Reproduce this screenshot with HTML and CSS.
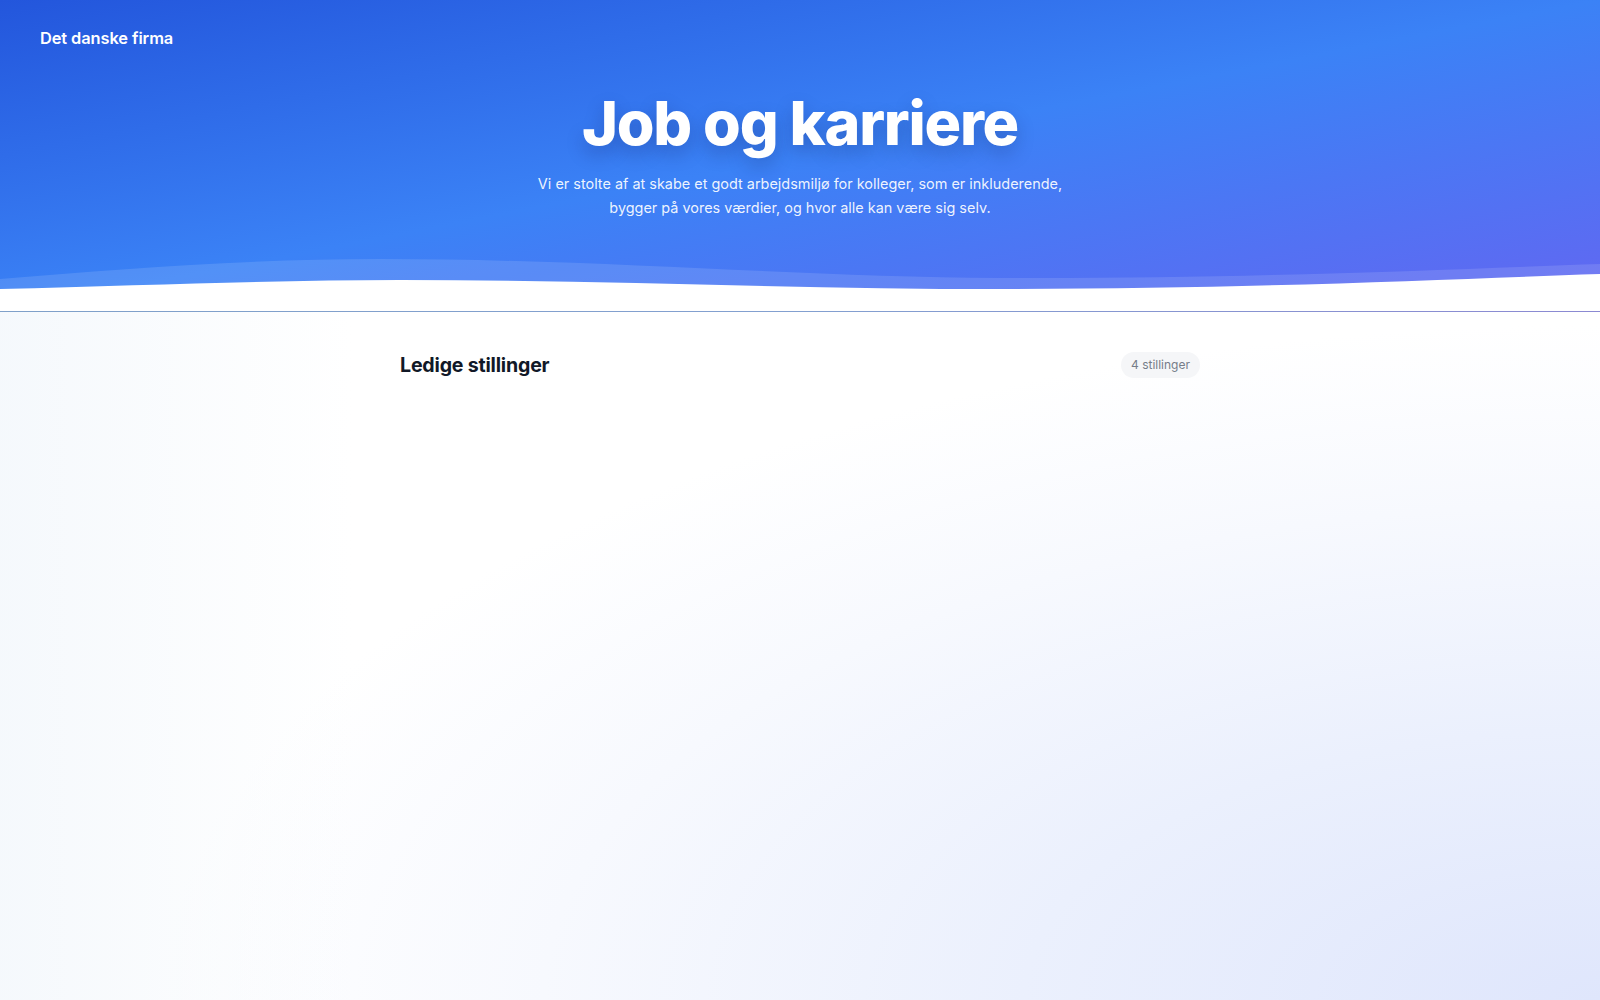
FILE: index.html
```html
<!DOCTYPE html>
<html lang="da">
<head>
<meta charset="utf-8">
<title>Job og karriere – Det danske firma</title>
<link rel="stylesheet" href="styles.css">
</head>
<body>
<section class="hero">
  <header class="topbar">
    <span class="brand">Det danske firma</span>
  </header>
  <div class="hero-content">
    <h1 class="hero-title">Job og karriere</h1>
    <p class="hero-sub">Vi er stolte af at skabe et godt arbejdsmiljø for kolleger, som er inkluderende, bygger på vores værdier, og hvor alle kan være sig selv.</p>
  </div>
  <svg class="wave" viewBox="0 0 1600 60" preserveAspectRatio="none" aria-hidden="true">
    <path d="M0,28 C120,18 250,8 380,8 C600,8 800,26 1000,27 C1250,28 1450,18 1600,13 L1600,60 L0,60 Z" fill="#ffffff" fill-opacity="0.12"/>
    <path d="M0,38 C150,34 280,29 400,29 C600,29 800,38 1000,38 C1250,38 1450,28 1600,23 L1600,60 L0,60 Z" fill="#ffffff"/>
  </svg>
  <div class="hero-line"></div>
</section>
<main class="jobs">
  <div class="jobs-head">
    <h2 class="jobs-title">Ledige stillinger</h2>
    <span class="badge">4 stillinger</span>
  </div>
</main>
</body>
</html>
```
FILE: styles.css
```css
html, body {
  margin: 0;
  padding: 0;
}
body {
  font-family: Inter, "Noto Sans", "Liberation Sans", sans-serif;
  min-height: 1000px;
  background:
    linear-gradient(90deg, rgba(244, 248, 252, 0.9) 0%, rgba(255, 255, 255, 0) 22%),
    radial-gradient(120% 90% at 100% 100%, #dfe6fc 0%, #ebf0fd 30%, #f7f9fe 55%, #ffffff 75%);
  background-color: #ffffff;
  color: #111827;
}
.hero {
  display: flex;
  flex-direction: column;
  background: linear-gradient(to bottom right, #2356dc 0%, #3b82f6 50%, #6366f1 100%);
  color: #ffffff;
}
.topbar {
  height: 76px;
  display: flex;
  align-items: center;
  padding: 0 40px;
}
.brand {
  font-size: 16.4px;
  font-weight: 600;
  letter-spacing: -0.005em;
}
.hero-content {
  display: flex;
  flex-direction: column;
  align-items: center;
  text-align: center;
  margin-top: 12px;
}
.hero-title {
  margin: 0;
  font-size: 61px;
  line-height: 70px;
  font-weight: 800;
  letter-spacing: -0.02em;
  text-shadow: 0 8px 18px rgba(20, 30, 90, 0.28);
}
.hero-sub {
  margin: 14px 0 0;
  max-width: 540px;
  font-size: 14.45px;
  line-height: 23.5px;
  color: rgba(255, 255, 255, 0.92);
}
.wave {
  display: block;
  width: 100%;
  height: 60px;
  margin-top: 32px;
}
.hero-line {
  height: 1px;
  background: linear-gradient(90deg, #7fa0c9 0%, #83a0d0 50%, #8b89d2 100%);
}
.jobs {
  max-width: 800px;
  margin: 0 auto;
  padding-top: 39px;
}
.jobs-head {
  display: flex;
  align-items: center;
  justify-content: space-between;
}
.jobs-title {
  margin: 0;
  font-size: 19.6px;
  line-height: 28px;
  font-weight: 700;
  letter-spacing: -0.01em;
  color: #111827;
}
.badge {
  font-size: 12px;
  line-height: 16px;
  padding: 5px 10px;
  border-radius: 999px;
  background: #f5f6f8;
  color: #767d89;
}
```
